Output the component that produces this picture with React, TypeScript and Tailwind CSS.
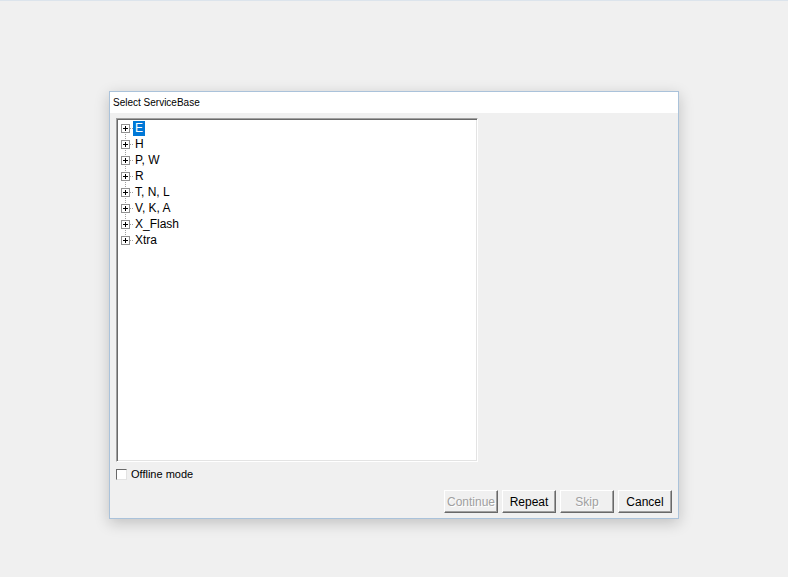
import React from "react";

const items = ["E", "H", "P, W", "R", "T, N, L", "V, K, A", "X_Flash", "Xtra"];

const TreeGlyph = ({ first, last }: { first: boolean; last: boolean }) => (
  <svg width="15" height="16" viewBox="0 0 15 16" className="shrink-0">
    {!first && <line x1="7.5" y1="0" x2="7.5" y2="4" stroke="#a0a0a0" strokeDasharray="1 1" />}
    {!last && <line x1="7.5" y1="12" x2="7.5" y2="16" stroke="#a0a0a0" strokeDasharray="1 1" />}
    <line x1="12" y1="8.5" x2="15" y2="8.5" stroke="#a0a0a0" strokeDasharray="1 1" />
    <rect x="3.5" y="4.5" width="8" height="8" fill="#fff" stroke="#919191" />
    <line x1="5" y1="8.5" x2="10" y2="8.5" stroke="#000" />
    <line x1="7.5" y1="6" x2="7.5" y2="11" stroke="#000" />
  </svg>
);

const Btn = ({ label, disabled }: { label: string; disabled?: boolean }) => (
  <div className="w-[54px] h-[23px] flex items-center justify-center bg-[#f0f0f0] border-t border-l border-t-white border-l-white border-b border-r border-b-[#696969] border-r-[#696969] shadow-[inset_-1px_-1px_0_#a0a0a0]">
    <span className={disabled ? "text-[#a0a0a0] [text-shadow:1px_1px_0_#fff]" : "text-black"}>{label}</span>
  </div>
);

export default function App() {
  return (
    <div
      className="w-full h-[577px] bg-[#f0f0f0] border-t border-t-[#dce4ec] pt-[90px] pl-[109px] text-[12px] text-black"
      style={{ fontFamily: '"Liberation Sans", Arial, sans-serif' }}
    >
      <div className="w-[570px] h-[428px] border border-[#aac2da] bg-[#f0f0f0] shadow-[0_4px_14px_rgba(0,0,0,0.2)] flex flex-col">
        {/* title bar */}
        <div className="h-[21px] bg-white flex items-center pl-[3px] text-[10px]">Select ServiceBase</div>

        {/* body */}
        <div className="flex-1 flex flex-col px-[6px] pt-[5px] pb-[5px]">
          <div className="w-[362px] h-[344px] bg-white border-t border-l border-t-[#a0a0a0] border-l-[#a0a0a0] border-b border-r border-b-white border-r-white shadow-[inset_1px_1px_0_#696969,inset_-1px_-1px_0_#e3e3e3] pt-[1px] pl-[1px]">
            {items.map((t, i) => (
              <div key={t} className="h-[16px] flex items-center">
                <TreeGlyph first={i === 0} last={i === items.length - 1} />
                <span
                  className={
                    "h-[15px] flex items-center px-[2px] leading-none " +
                    (i === 0 ? "bg-[#0078d7] text-white" : "")
                  }
                >
                  {t}
                </span>
              </div>
            ))}
          </div>

          <div className="flex items-center gap-[4px] mt-[6px] h-[13px] text-[11px]">
            <div className="w-[11px] h-[11px] bg-white border-t border-l border-t-[#696969] border-l-[#696969] border-b border-r border-b-[#e3e3e3] border-r-[#e3e3e3]" />
            <span>Offline mode</span>
          </div>

          <div className="mt-auto flex justify-end gap-[4px]">
            <Btn label="Continue" disabled />
            <Btn label="Repeat" />
            <Btn label="Skip" disabled />
            <Btn label="Cancel" />
          </div>
        </div>
      </div>
    </div>
  );
}
